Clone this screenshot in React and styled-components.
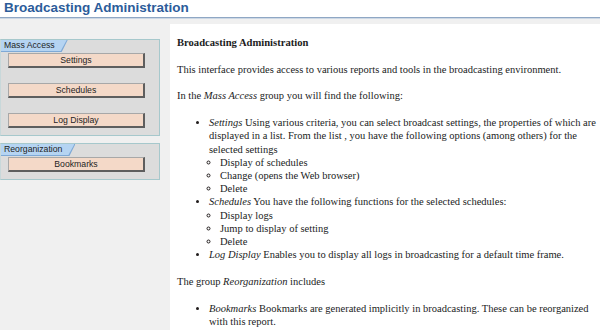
import React from "react";
import styled, { createGlobalStyle } from "styled-components";

const Global = createGlobalStyle`
  html, body { margin: 0; padding: 0; background: #f0f0f0; }
  #root { min-height: 100vh; display: flex; flex-direction: column; }
`;

const Page = styled.div`
  flex: 1;
  display: flex;
  flex-direction: column;
  min-height: 330px;
`;

const Header = styled.header`
  height: 17px;
  background: #ffffff;
  border-bottom: 1px solid #8fa7c4;
  box-shadow: 0 1px 0 #cdd8e5;
  padding-left: 4px;
  display: flex;
  align-items: center;
`;

const Title = styled.h1`
  margin: 0;
  font-family: "Liberation Sans", Arial, sans-serif;
  font-size: 13.5px;
  font-weight: bold;
  color: #2c5c9a;
  line-height: 17px;
  position: relative;
  top: -1px;
`;

const Body = styled.div`
  flex: 1;
  display: flex;
`;

const Sidebar = styled.aside`
  width: 170px;
  flex: none;
  padding-top: 21px;
  box-sizing: border-box;
`;

const Group = styled.section`
  width: 160px;
  box-sizing: border-box;
  border: 1px solid #a6c8cc;
  border-left-color: #c8d8da;
  background: #dcdcdc;
  padding-bottom: 7px;
  & + & { margin-top: 7px; }
`;

const TabOuter = styled.div`
  display: block;
  width: fit-content;
  background: #7ea9d6;
  clip-path: polygon(0 0, 100% 0, calc(100% - 6px) 100%, 0 100%);
  padding: 0 1px 1px 0;
`;

const TabInner = styled.div`
  background: #b5d4f2;
  clip-path: polygon(0 0, 100% 0, calc(100% - 6px) 100%, 0 100%);
  height: 11px;
  padding: 0 12px 0 3px;
  font-family: "Liberation Sans", Arial, sans-serif;
  font-size: 8.7px;
  line-height: 11px;
  color: #1e1e1e;
`;

const Buttons = styled.div`
  display: flex;
  flex-direction: column;
  gap: 15px;
  padding: 1px 0 0 7px;
`;

const ActionButton = styled.button`
  display: block;
  width: 137px;
  height: 15px;
  box-sizing: border-box;
  margin: 0;
  padding: 0;
  background: #f4d9c8;
  border-top: 1px solid #a8a8a8;
  border-left: 1px solid #a8a8a8;
  border-right: 2px solid #5e5e5e;
  border-bottom: 2px solid #5e5e5e;
  font-family: "Liberation Sans", Arial, sans-serif;
  font-size: 8.7px;
  line-height: 12px;
  color: #1e1e1e;
  text-align: center;
  cursor: pointer;
`;

const Panel = styled.main`
  flex: 1;
  margin-top: 6px;
  background: #ffffff;
  padding: 12px 2px 0 7px;
  font-family: "Liberation Serif", "Times New Roman", serif;
  font-size: 10.5px;
  line-height: 13.2px;
  color: #211c1c;
`;

const Heading = styled.h2`
  margin: 0 0 13px 0;
  font-size: 10.6px;
  font-weight: bold;
  line-height: 13.2px;
`;

const Para = styled.p`
  margin: 13.5px 0;
`;

const List = styled.ul`
  margin: ${(p) => (p.$nested ? "0" : "13.5px 0")};
  padding-left: ${(p) => (p.$nested ? "11px" : "32px")};
  list-style-type: ${(p) => (p.$nested ? "circle" : "disc")};
`;

const Term = styled.em`
  font-style: italic;
`;

export default function App() {
  const groups = [
    { title: "Mass Access", items: ["Settings", "Schedules", "Log Display"] },
    { title: "Reorganization", items: ["Bookmarks"] },
  ];
  return (
    <Page>
      <Global />
      <Header>
        <Title>Broadcasting Administration</Title>
      </Header>
      <Body>
        <Sidebar>
          {groups.map((g) => (
            <Group key={g.title}>
              <TabOuter>
                <TabInner>{g.title}</TabInner>
              </TabOuter>
              <Buttons>
                {g.items.map((it) => (
                  <ActionButton key={it}>{it}</ActionButton>
                ))}
              </Buttons>
            </Group>
          ))}
        </Sidebar>
        <Panel>
          <Heading>Broadcasting Administration</Heading>
          <Para>
            This interface provides access to various reports and tools in the broadcasting environment.
          </Para>
          <Para>
            In the <Term>Mass Access</Term> group you will find the following:
          </Para>
          <List>
            <li>
              <Term>Settings</Term> Using various criteria, you can select broadcast settings, the properties of which are displayed in a list. From the list , you have the following options (among others) for the selected settings
              <List $nested>
                <li>Display of schedules</li>
                <li>Change (opens the Web browser)</li>
                <li>Delete</li>
              </List>
            </li>
            <li>
              <Term>Schedules</Term> You have the following functions for the selected schedules:
              <List $nested>
                <li>Display logs</li>
                <li>Jump to display of setting</li>
                <li>Delete</li>
              </List>
            </li>
            <li>
              <Term>Log Display</Term> Enables you to display all logs in broadcasting for a default time frame.
            </li>
          </List>
          <Para>
            The group <Term>Reorganization</Term> includes
          </Para>
          <List>
            <li>
              <Term>Bookmarks</Term> Bookmarks are generated implicitly in broadcasting. These can be reorganized with this report.
            </li>
          </List>
        </Panel>
      </Body>
    </Page>
  );
}
